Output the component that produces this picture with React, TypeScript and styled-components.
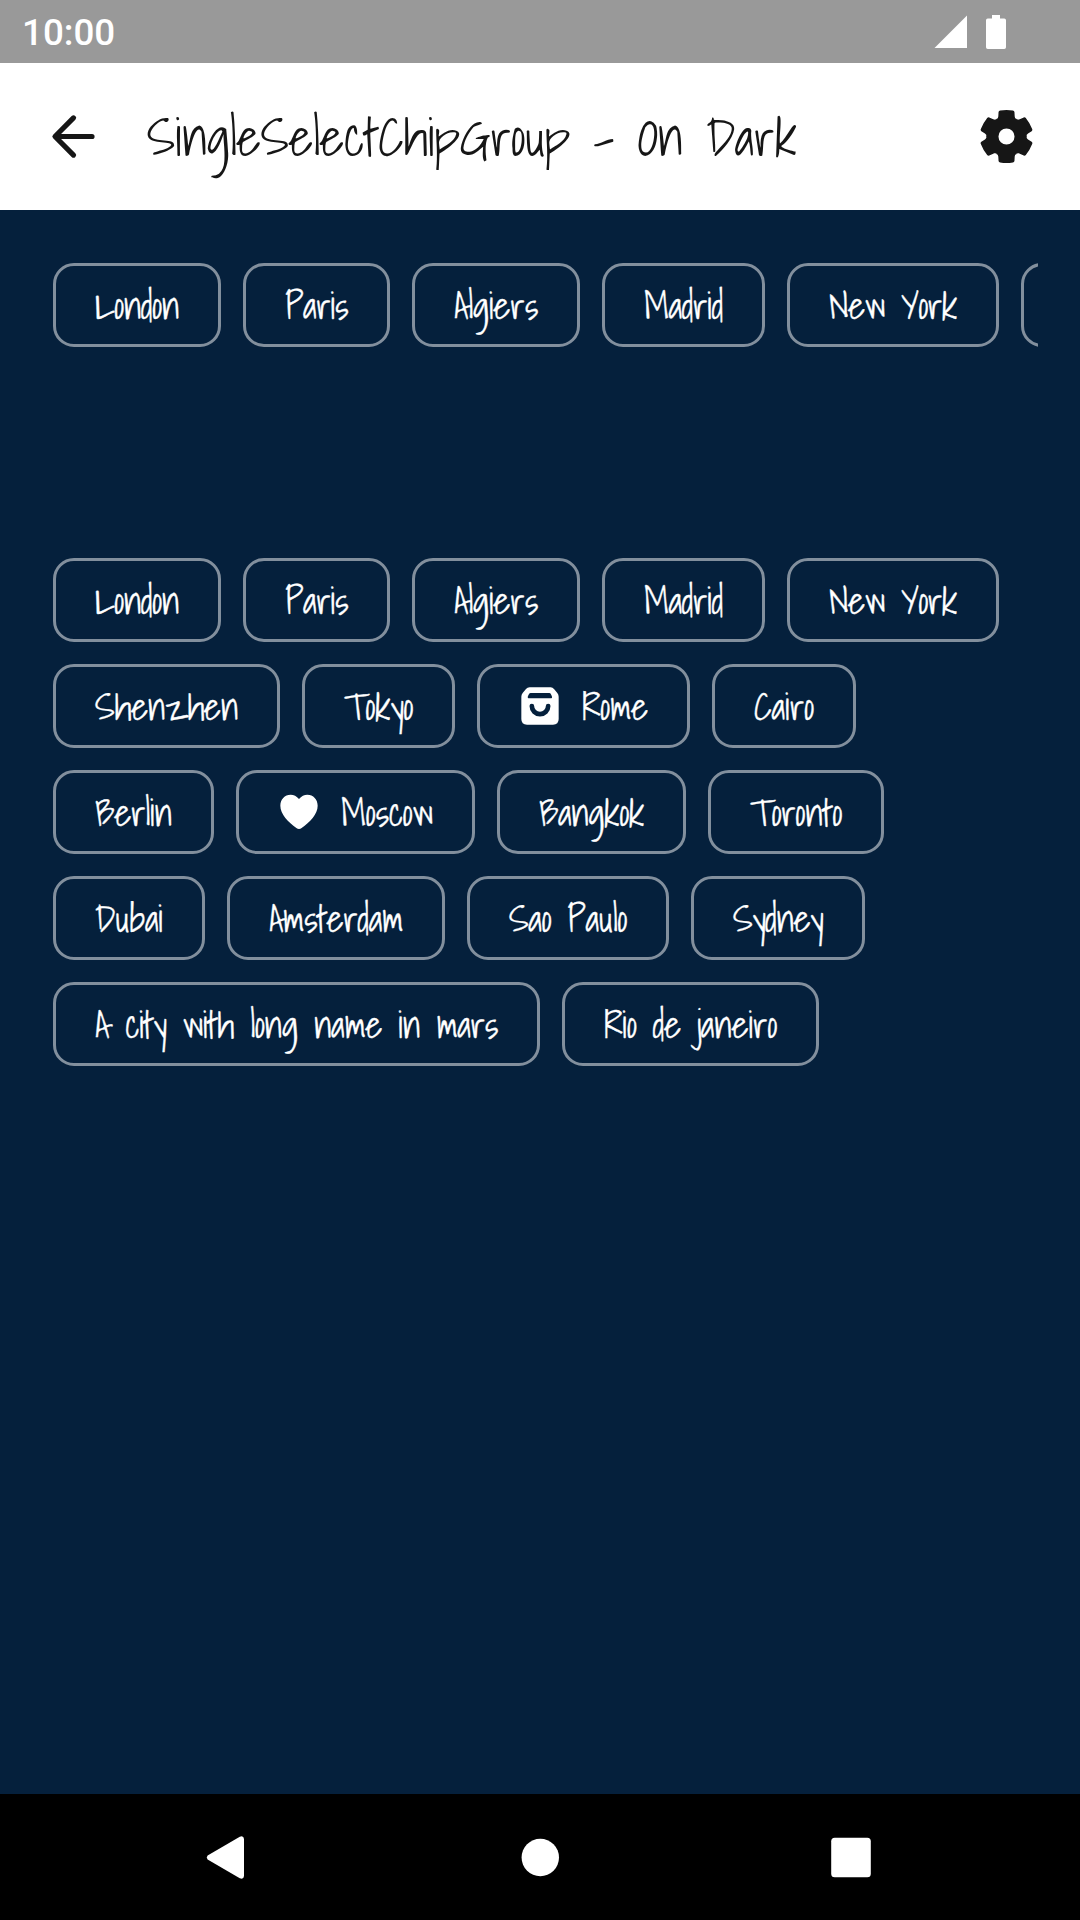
import React, { useLayoutEffect, useRef, useState } from "react";
import styled, { createGlobalStyle } from "styled-components";

const NAVY = "#05203c";
const INK = "#161616";
const HAND = `"Shadows Into Light", Lato, sans-serif`;

const GlobalStyle = createGlobalStyle`
  *, *::before, *::after { box-sizing: border-box; }
  body { margin: 0; background: ${NAVY}; }
`;

const Screen = styled.div`
  display: flex;
  flex-direction: column;
  width: 1080px;
  height: 1920px;
  overflow: hidden;
  background: ${NAVY};
`;

const StatusBar = styled.header`
  display: flex;
  align-items: center;
  flex: none;
  height: 63px;
  padding: 0 74px 0 22px;
  background: #999999;
  color: #ffffff;
`;

const Clock = styled.time`
  flex: 1;
  padding-top: 4px;
  font: 500 36.75px/1 Roboto, sans-serif;
`;

const StatusIcons = styled.div`
  display: flex;
  align-items: center;
  gap: 19px;
`;

const Toolbar = styled.nav`
  display: flex;
  align-items: center;
  flex: none;
  height: 147px;
  padding: 0 42px;
  background: #ffffff;
  color: ${INK};
`;

const IconButton = styled.button`
  display: flex;
  flex: none;
  padding: 0;
  border: 0;
  background: none;
  color: inherit;
`;

const Title = styled.h1`
  flex: 1;
  margin: 0;
  padding: 0 0 1px 42px;
  font-family: ${HAND};
  font-size: 52.5px;
  font-weight: 400;
  line-height: 1.2;
`;

const Content = styled.main`
  display: flex;
  flex: 1;
  flex-direction: column;
  gap: 211px;
  padding: 53px 42px 0 53px;
`;

const ChipGroup = styled.div<{ $wrap?: boolean }>`
  display: flex;
  flex-wrap: ${(p) => (p.$wrap ? "wrap" : "nowrap")};
  gap: 22px;
  overflow: hidden;
`;

const ChipBox = styled.button`
  display: flex;
  flex: none;
  align-items: center;
  gap: 21px;
  height: 84px;
  padding: 0 39px;
  border: 3px solid #828f9d;
  border-radius: 21px;
  background: transparent;
  color: #ffffff;
  font-family: ${HAND};
  font-size: 36.75px;
  font-weight: 400;
  line-height: 1.2;
  -webkit-text-stroke: 0.3px #ffffff;
`;

const ChipLabel = styled.span`
  padding-top: 2px;
`;

const FitFrame = styled.span<{ $width: number }>`
  display: block;
  width: ${(p) => p.$width}px;
  text-align: left;
  white-space: nowrap;
`;

const NavBar = styled.footer`
  display: flex;
  align-items: center;
  justify-content: space-between;
  flex: none;
  height: 126px;
  padding: 0 197px;
  background: #000000;
  color: #ffffff;
`;

/** Sets a line of text to the given width by tightening its letter spacing. */
function FitText({ width, children }: { width: number; children: string }) {
  const ref = useRef<HTMLSpanElement>(null);
  const [spacing, setSpacing] = useState(0);
  useLayoutEffect(() => {
    const el = ref.current;
    if (!el) return;
    el.style.letterSpacing = "0px";
    setSpacing((width - el.getBoundingClientRect().width) / children.length);
  }, [width, children]);
  return (
    <FitFrame $width={width}>
      <span ref={ref} style={{ letterSpacing: `${spacing}px` }}>
        {children}
      </span>
    </FitFrame>
  );
}

const SignalIcon = () => (
  <svg width="33" height="34" viewBox="0 0 33 34" fill="currentColor">
    <path d="M0.5 33 33 0.5V33Z" />
  </svg>
);

const BatteryIcon = () => (
  <svg width="20" height="34" viewBox="0 0 20 34" fill="currentColor">
    <path d="M6 0h8v3.4h4.2A1.8 1.8 0 0 1 20 5.2v27A1.8 1.8 0 0 1 18.2 34H1.8A1.8 1.8 0 0 1 0 32.2v-27A1.8 1.8 0 0 1 1.8 3.4H6Z" />
  </svg>
);

const BackIcon = () => (
  <svg width="63" height="63" viewBox="0 0 63 63" fill="none" stroke="currentColor" strokeWidth="5.2" strokeLinecap="round" strokeLinejoin="round">
    <path d="M50 31.5H13.5M31.5 12.9 13 31.5 31.5 50.1" />
  </svg>
);

type Point = [number, number];

function gearPath(): string {
  const turn = ([x, y]: Point, deg: number): string => {
    const a = (deg * Math.PI) / 180;
    const px = x * Math.cos(a) - y * Math.sin(a);
    const py = x * Math.sin(a) + y * Math.cos(a);
    return `${px.toFixed(2)} ${py.toFixed(2)}`;
  };
  let d = "";
  for (let k = 0; k < 6; k++) {
    const at = (x: number, y: number) => turn([x, y], k * 60);
    // the far side of the notch is the near side of the next tooth
    const next = (x: number, y: number) => turn([x, y], k * 60 + 60);
    d += `${k === 0 ? "M" : "L"}${at(-19, -77.5)}Q${at(0, -80.5)} ${at(19, -77.5)}`;
    d += `Q${at(23, -77)} ${at(23.7, -73)}L${at(24.5, -60)}`;
    d += `C${at(25.5, -54)} ${at(28, -51)} ${at(34, -50)}`;
    d += `Q${next(-30.3, -52.6)} ${next(-34, -50)}`;
    d += `C${next(-28, -51)} ${next(-25.5, -54)} ${next(-24.5, -60)}`;
    d += `L${next(-23.7, -73)}Q${next(-23, -77)} ${next(-19, -77.5)}`;
  }
  return `${d}ZM24 0A24 24 0 1 0-24 0A24 24 0 1 0 24 0Z`;
}

const GearIcon = () => (
  <svg width="63" height="63" viewBox="-94 -94 188 188" fill="currentColor" fillRule="evenodd">
    <path d={gearPath()} />
  </svg>
);

const BagIcon = () => (
  <svg width="42" height="42" viewBox="0 0 126 126" fill="currentColor">
    <path
      fillRule="evenodd"
      d="M32 7H95Q101 7 105 12L115 24Q119 29 119 35V102Q119 119 102 119H24Q7 119 7 102V35Q7 29 11 24L21 12Q25 7 32 7ZM35 24Q32 24 30 27L27 33Q24 40 31 40H94Q102 40 98 32L95 26Q94 24 91 24Z"
    />
    <path d="M38.5 63A24.5 24.5 0 0 0 87.5 63" fill="none" stroke={NAVY} strokeWidth="14" strokeLinecap="round" />
  </svg>
);

const HeartIcon = () => (
  <svg width="42" height="42" viewBox="0 0 126 126" fill="currentColor">
    <path d="M63 24C56 15 47 11 38 11C20 11 7 25 7 44C7 70 31 93 55 111Q63 117 71 111C95 93 119 70 119 44C119 25 106 11 88 11C79 11 70 15 63 24Z" />
  </svg>
);

const NavBack = () => (
  <svg width="57" height="57" viewBox="0 0 57 57" fill="currentColor">
    <path d="M10.6 26.6 42.8 7.7Q46.7 6.3 47 10V47Q46.7 50.7 42.8 49.3L10.6 30.4Q8.8 28.5 10.6 26.6Z" />
  </svg>
);

const NavHome = () => (
  <svg width="57" height="57" viewBox="0 0 57 57" fill="currentColor">
    <circle cx="28.3" cy="28.5" r="18.7" />
  </svg>
);

const NavRecent = () => (
  <svg width="57" height="57" viewBox="0 0 57 57" fill="currentColor">
    <rect x="5.2" y="8.7" width="39.6" height="39.6" rx="3.5" />
  </svg>
);

interface City {
  name: string;
  width: number;
  icon?: React.ReactNode;
}

const cities: City[] = [
  { name: "London", width: 84 },
  { name: "Paris", width: 63 },
  { name: "Algiers", width: 84 },
  { name: "Madrid", width: 79 },
  { name: "New York", width: 128 },
  { name: "Shenzhen", width: 143 },
  { name: "Tokyo", width: 69 },
  { name: "Rome", width: 66, icon: <BagIcon /> },
  { name: "Cairo", width: 60 },
  { name: "Berlin", width: 77 },
  { name: "Moscow", width: 92, icon: <HeartIcon /> },
  { name: "Bangkok", width: 105 },
  { name: "Toronto", width: 92 },
  { name: "Dubai", width: 68 },
  { name: "Amsterdam", width: 134 },
  { name: "Sao Paulo", width: 118 },
  { name: "Sydney", width: 90 },
  { name: "A city with long name in mars", width: 403 },
  { name: "Rio de janeiro", width: 173 },
];

const Chip = ({ city }: { city: City }) => (
  <ChipBox>
    {city.icon}
    <ChipLabel>
      <FitText width={city.width}>{city.name}</FitText>
    </ChipLabel>
  </ChipBox>
);

export default function App() {
  return (
    <Screen>
      <GlobalStyle />
      <StatusBar>
        <Clock>10:00</Clock>
        <StatusIcons>
          <SignalIcon />
          <BatteryIcon />
        </StatusIcons>
      </StatusBar>
      <Toolbar>
        <IconButton aria-label="Back">
          <BackIcon />
        </IconButton>
        <Title>
          <FitText width={650}>SingleSelectChipGroup - On Dark</FitText>
        </Title>
        <IconButton aria-label="Settings">
          <GearIcon />
        </IconButton>
      </Toolbar>
      <Content>
        <ChipGroup>
          {cities.slice(0, 6).map((c) => (
            <Chip key={c.name} city={c} />
          ))}
        </ChipGroup>
        <ChipGroup $wrap>
          {cities.map((c) => (
            <Chip key={c.name} city={c} />
          ))}
        </ChipGroup>
      </Content>
      <NavBar>
        <NavBack />
        <NavHome />
        <NavRecent />
      </NavBar>
    </Screen>
  );
}
